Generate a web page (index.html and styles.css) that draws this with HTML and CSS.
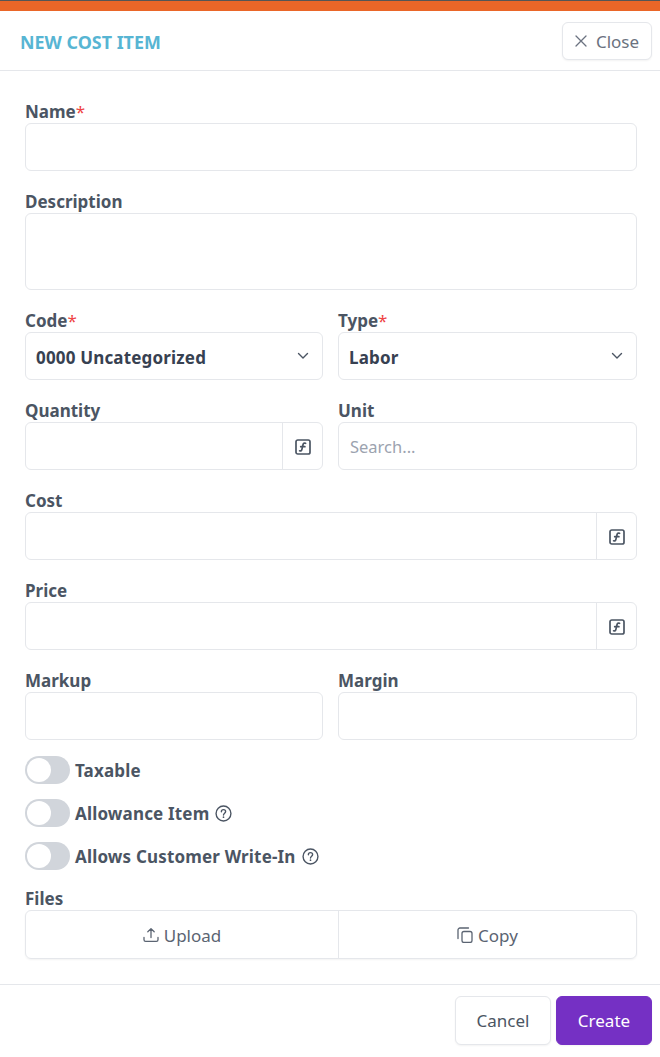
FILE: index.html
```html
<!DOCTYPE html>
<html lang="en">
<head>
<meta charset="utf-8">
<title>New Cost Item</title>
<link rel="stylesheet" href="styles.css">
</head>
<body>
<svg class="defs" width="0" height="0" aria-hidden="true">
  <symbol id="fx" viewBox="0 0 16 16">
    <rect x="1" y="1" width="14" height="14" rx="1.800" fill="none" stroke="currentColor" stroke-width="1.700"/>
    <path d="M10.600 4.300c-1.500-.5-2.300.1-2.600 1.400L6.900 10.400c-.3 1.300-1 1.800-2.300 1.400M5.700 7.700h4.200" fill="none" stroke="currentColor" stroke-width="1.700" stroke-linecap="round"/>
  </symbol>
  <symbol id="help" viewBox="0 0 16 16">
    <circle cx="8" cy="8" r="7" fill="none" stroke="currentColor" stroke-width="1.300"/>
    <path d="M6 6.300c0-1.200.9-2 2-2s2 .8 2 1.900c0 1.600-2 1.600-2 3.300" fill="none" stroke="currentColor" stroke-width="1.300" stroke-linecap="round"/>
    <circle cx="8" cy="11.500" r=".8" fill="currentColor"/>
  </symbol>
  <symbol id="chev" viewBox="0 0 12 8">
    <path d="M1.500 1.500 6 6l4.500-4.500" fill="none" stroke="currentColor" stroke-width="1.400" stroke-linecap="round" stroke-linejoin="round"/>
  </symbol>
</svg>
<div class="modal">
  <div class="topbar"></div>
  <header class="head">
    <h1 class="title">NEW COST ITEM</h1>
    <button class="btn close" type="button">
      <svg class="x" viewBox="0 0 12 12"><path d="M1 1l10 10M11 1 1 11" fill="none" stroke="currentColor" stroke-width="1.300" stroke-linecap="round"/></svg>
      <span class="close-text">Close</span>
    </button>
  </header>
  <form class="form">
    <div class="field">
      <label class="label">Name<span class="req">*</span></label>
      <div class="box"></div>
    </div>
    <div class="field">
      <label class="label">Description</label>
      <div class="box area"></div>
    </div>
    <div class="row">
      <div class="field">
        <label class="label">Code<span class="req">*</span></label>
        <div class="box select"><span class="value">0000 Uncategorized</span><svg class="chev"><use href="#chev"/></svg></div>
      </div>
      <div class="field">
        <label class="label">Type<span class="req">*</span></label>
        <div class="box select"><span class="value">Labor</span><svg class="chev"><use href="#chev"/></svg></div>
      </div>
    </div>
    <div class="row">
      <div class="field">
        <label class="label">Quantity</label>
        <div class="box addon"><div class="grow"></div><div class="fx"><svg class="fxi"><use href="#fx"/></svg></div></div>
      </div>
      <div class="field">
        <label class="label">Unit</label>
        <div class="box search">Search...</div>
      </div>
    </div>
    <div class="field">
      <label class="label">Cost</label>
      <div class="box addon"><div class="grow"></div><div class="fx"><svg class="fxi"><use href="#fx"/></svg></div></div>
    </div>
    <div class="field">
      <label class="label">Price</label>
      <div class="box addon"><div class="grow"></div><div class="fx"><svg class="fxi"><use href="#fx"/></svg></div></div>
    </div>
    <div class="row">
      <div class="field">
        <label class="label">Markup</label>
        <div class="box"></div>
      </div>
      <div class="field">
        <label class="label">Margin</label>
        <div class="box"></div>
      </div>
    </div>
    <div class="toggles">
      <div class="toggle"><span class="switch"><span class="knob"></span></span><span class="tlabel">Taxable</span></div>
      <div class="toggle"><span class="switch"><span class="knob"></span></span><span class="tlabel">Allowance Item</span><svg class="help"><use href="#help"/></svg></div>
      <div class="toggle"><span class="switch"><span class="knob"></span></span><span class="tlabel">Allows Customer Write-In</span><svg class="help"><use href="#help"/></svg></div>
    </div>
    <div class="files">
      <label class="label">Files</label>
      <div class="split">
        <button class="part first" type="button">
          <svg class="ico" viewBox="0 0 16 16"><path d="M8 10.500V1.800M4.800 4.800 8 1.600l3.200 3.200M1 10.500v2.300c0 .9.700 1.600 1.600 1.600h10.800c.9 0 1.600-.7 1.600-1.600v-2.300" fill="none" stroke="currentColor" stroke-width="1.300" stroke-linecap="round" stroke-linejoin="round"/></svg>
          <span class="part-text">Upload</span>
        </button>
        <button class="part second" type="button">
          <svg class="ico" viewBox="0 0 16 16"><rect x="5" y="4.500" width="10" height="11" rx="2" fill="none" stroke="currentColor" stroke-width="1.300"/><path d="M11.500 1H3C1.900 1 1 1.900 1 3v8.500" fill="none" stroke="currentColor" stroke-width="1.300" stroke-linecap="round"/></svg>
          <span class="part-text">Copy</span>
        </button>
      </div>
    </div>
  </form>
  <footer class="foot">
    <button class="btn cancel" type="button">Cancel</button>
    <button class="btn create" type="button">Create</button>
  </footer>
</div>
</body>
</html>
```
FILE: styles.css
```css
* { box-sizing: border-box; }
html, body { margin: 0; padding: 0; background: #fff; }
body { font-family: "Noto Sans", "Open Sans", sans-serif; color: #4b5563; width: 660px; height: 1057px; overflow: hidden; }
.defs { position: absolute; }
.topbar { height: 11px; background: #ea6628; border-top: 1px solid #555; }
.head { height: 60px; display: flex; align-items: center; justify-content: space-between; padding: 0 8px 0 20px; border-bottom: 1px solid #e5e7eb; }
.title { margin: 0; font-size: 17.900px; font-weight: 700; color: #57b5d3; padding-top: 2px; }
button { font-family: inherit; cursor: pointer; }
.btn { background: #fff; border: 1px solid #e5e7eb; border-radius: 6px; color: #4b5563; font-size: 17px; box-shadow: 0 1px 2px rgba(0,0,0,.05); }
.close { width: 90px; height: 38px; display: flex; align-items: center; justify-content: center; gap: 8px; padding: 0; color: #6b7280; }
.close-text { padding-top: 2px; margin-left: 1px; }
.x { width: 12px; height: 12px; }
.form { padding: 28px 23px 0 25px; display: flex; flex-direction: column; gap: 18px; }
.row { display: grid; grid-template-columns: 298px 299px; gap: 15px; }
.label { display: block; height: 24px; line-height: 26px; font-size: 17px; font-weight: 700; color: #4b5563; }
.req { color: #ef4444; font-weight: 400; }
.box { height: 48px; border: 1px solid #e5e7eb; border-radius: 6px; background: #fff; }
.area { height: 77px; }
.select { display: flex; align-items: center; justify-content: space-between; padding: 0 13px 0 10px; font-size: 17px; font-weight: 700; color: #374151; }
.value { padding-top: 2px; letter-spacing: .17px; }
.chev { width: 12px; height: 8px; color: #4b5563; }
.addon { display: flex; overflow: hidden; }
.grow { flex: 1; }
.fx { width: 40px; border-left: 1px solid #e5e7eb; display: flex; align-items: center; justify-content: center; padding-top: 1px; }
.fxi { width: 16px; height: 16px; color: #4b5563; }
.search { display: flex; align-items: center; padding: 0 11px; font-size: 16.500px; color: #9ca3af; }
.toggles { display: flex; flex-direction: column; gap: 15px; margin-top: -2px; }
.toggle { height: 28px; display: flex; align-items: center; }
.switch { width: 45px; height: 28px; background: #d1d5db; border-radius: 14px; padding: 2px; margin-right: 5px; }
.knob { display: block; width: 24px; height: 24px; background: #fff; border-radius: 50%; }
.tlabel { font-size: 17px; font-weight: 700; color: #4b5563; letter-spacing: .17px; }
.help { width: 17px; height: 17px; margin-left: 6px; color: #4b5563; }
.files { margin-top: -1px; }
.files .label { height: 23px; line-height: 24px; }
.split { display: flex; height: 49px; border: 1px solid #e5e7eb; border-radius: 6px; box-shadow: 0 1px 2px rgba(0,0,0,.05); }
.part { background: none; border: 0; display: flex; align-items: center; justify-content: center; gap: 5px; font-size: 17px; color: #5b6472; padding: 0; }
.part-text { padding-top: 2px; }
.first { width: 313px; border-right: 1px solid #e5e7eb; }
.second { flex: 1; }
.ico { width: 16px; height: 16px; }
.foot { position: absolute; left: 0; right: 0; top: 984px; height: 73px; border-top: 1px solid #e5e7eb; display: flex; justify-content: flex-end; align-items: flex-start; gap: 5px; padding: 11px 8px 0 0; }
.foot .btn { width: 96px; height: 49px; padding: 0; }
.create { background: #7530c4; border-color: #7530c4; color: #fff; }
```
